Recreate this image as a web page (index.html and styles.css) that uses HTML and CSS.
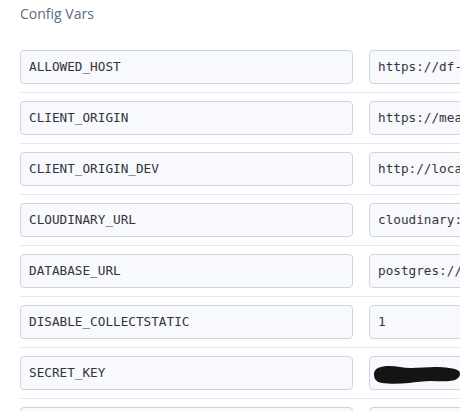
FILE: index.html
```html
<!DOCTYPE html>
<html>
<head>
<meta charset="utf-8">
<link rel="stylesheet" href="styles.css">
</head>
<body>
<div class="page">
  <h2 class="title">Config Vars</h2>
  <div class="list">
    <div class="row"><div class="field">ALLOWED_HOST</div><div class="field">https://df-api-backend.herokuapp.com</div></div>
    <div class="sep"></div>
    <div class="row"><div class="field">CLIENT_ORIGIN</div><div class="field">https://meals-frontend.herokuapp.com</div></div>
    <div class="sep"></div>
    <div class="row"><div class="field">CLIENT_ORIGIN_DEV</div><div class="field">http://localhost:3000</div></div>
    <div class="sep"></div>
    <div class="row"><div class="field">CLOUDINARY_URL</div><div class="field">cloudinary://4829:xyz@dfapi</div></div>
    <div class="sep"></div>
    <div class="row"><div class="field">DATABASE_URL</div><div class="field">postgres://user:pass@host:5432/db</div></div>
    <div class="sep"></div>
    <div class="row"><div class="field">DISABLE_COLLECTSTATIC</div><div class="field">1</div></div>
    <div class="sep"></div>
    <div class="row"><div class="field">SECRET_KEY</div><div class="field secret"><span class="hidden-val">xxxxxxxxxxxxx</span><svg class="scribble" width="88" height="20" viewBox="0 0 88 20"><path d="M1 9 C1 3 8 1 16 1 C24 1 30 3 38 3 C46 3 54 2 62 2 C72 2 82 3 86 6 C88 9 87 13 82 15 C76 17 66 16 58 16 C50 16 44 17 36 18 C26 19 16 19 9 18 C3 17 1 14 1 9 Z" fill="#141414"/></svg></div></div>
    <div class="sep"></div>
    <div class="row"><div class="field">STRIPE_KEY</div><div class="field">sk_test</div></div>
  </div>
</div>
</body>
</html>
```
FILE: styles.css
```css
html, body {
  margin: 0;
  padding: 0;
  background: #ffffff;
  overflow: hidden;
}
.page {
  width: 460px;
  height: 411px;
  overflow: hidden;
  padding-left: 20px;
  box-sizing: border-box;
  font-family: "Open Sans", "Noto Sans", sans-serif;
}
.title {
  margin: 0;
  padding-top: 4px;
  font-size: 14px;
  line-height: 20px;
  font-weight: 400;
  color: #5b6b83;
  height: 50px;
  box-sizing: border-box;
}
.list {
  display: flex;
  flex-direction: column;
  gap: 8px;
  width: 760px;
}
.row {
  display: grid;
  grid-template-columns: 333px 333px;
  column-gap: 16px;
}
.sep {
  height: 1px;
  background: #e6e9f0;
}
.field {
  height: 34px;
  box-sizing: border-box;
  border: 1px solid #ccd5e6;
  border-radius: 4px;
  background: #f8f9fc;
  padding: 0 8px;
  font-family: "DejaVu Sans Mono", monospace;
  font-size: 12.7px;
  line-height: 32px;
  color: #33353d;
  white-space: nowrap;
  overflow: hidden;
}
.secret {
  position: relative;
}
.hidden-val {
  color: #c9a64a;
  padding-left: 82px;
}
.scribble {
  position: absolute;
  left: 3px;
  top: 8px;
}
```
